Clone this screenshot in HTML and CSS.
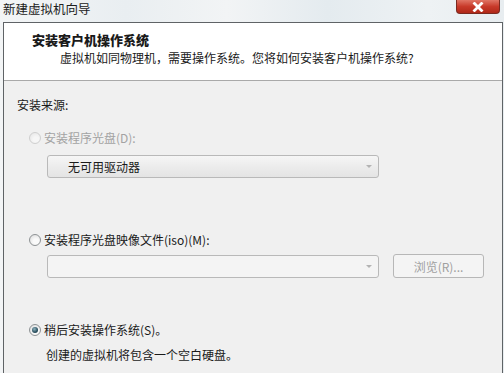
FILE: index.html
```html
<!DOCTYPE html>
<html lang="zh-CN">
<head>
    <meta charset="UTF-8">
    <title>新建虚拟机向导</title>
    <link rel="stylesheet" href="styles.css">
</head>
<body>
    <div class="titlebar">
        <span class="title">新建虚拟机向导</span>
        <span class="close-btn">
            <svg width="14" height="10" viewBox="0 0 14 10">
                <path d="M3.5 1.5 L10.5 8.5 M10.5 1.5 L3.5 8.5" stroke="#fff" stroke-width="2.8" stroke-linecap="square"/>
            </svg>
        </span>
    </div>

    <div class="dialog">
        <div class="header">
            <div class="header-title">安装客户机操作系统</div>
            <div class="header-sub">虚拟机如同物理机，需要操作系统。您将如何安装客户机操作系统?</div>
        </div>

        <div class="content">
            <div class="group-label">安装来源:</div>

            <div class="option option-first disabled">
                <span class="radio"></span>
                <span>安装程序光盘(D):</span>
            </div>
            <div class="combo combo-drive">
                <span class="combo-text">无可用驱动器</span>
                <span class="combo-arrow"></span>
            </div>

            <div class="option option-iso">
                <span class="radio"></span>
                <span>安装程序光盘映像文件(iso)(M):</span>
            </div>
            <div class="iso-row">
                <div class="combo combo-iso">
                    <span class="combo-text"></span>
                    <span class="combo-arrow"></span>
                </div>
                <button class="browse-btn" disabled>浏览(R)...</button>
            </div>

            <div class="option option-later">
                <span class="radio checked"></span>
                <span>稍后安装操作系统(S)。</span>
            </div>
            <div class="option-note">创建的虚拟机将包含一个空白硬盘。</div>
        </div>
    </div>
</body>
</html>
```

FILE: styles.css
```css
body {
    margin: 0;
    font-family: "Noto Sans CJK SC", "Liberation Sans", sans-serif;
    font-size: 12px;
    color: #1a1a1a;
    background: linear-gradient(to right, #f3f5f6, #e9eef1 25%, #f2f4f5 45%, #e4ebef 65%, #eef2f4 85%, #e8edf0);
    height: 373px;
    overflow: hidden;
}
.titlebar {
    height: 22px;
    display: flex;
    justify-content: space-between;
    align-items: flex-start;
    padding: 0 4px 0 3px;
}
.title {
    line-height: 18px;
    color: #202020;
    font-size: 12.5px;
}
.close-btn {
    width: 44px;
    height: 14px;
    box-sizing: border-box;
    border: 1px solid #7a2a20;
    border-top: none;
    border-radius: 0 0 4px 4px;
    background: linear-gradient(#e07565, #c83a2a 50%, #b02818);
    display: flex;
    align-items: center;
    justify-content: center;
}
.dialog {
    margin: 0 1px 0 3px;
    border: 1px solid #5f6366;
    border-bottom: none;
    background: #f0f0f0;
    height: 351px;
}
.header {
    background: #fff;
    height: 57px;
    border-bottom: 1px solid #a9a9a9;
}
.header-title {
    font-weight: 900;
    font-size: 13px;
    line-height: 16px;
    padding: 9px 0 0 28px;
}
.header-sub {
    line-height: 18px;
    padding-left: 56px;
    margin-top: 1px;
}
.content {
    padding-left: 13px;
}
.group-label {
    line-height: 18px;
    margin-top: 15px;
}
.option {
    display: flex;
    align-items: center;
    gap: 3px;
    line-height: 18px;
    padding-left: 12px;
}
.option-first {
    margin-top: 15px;
}
.option-iso {
    margin-top: 53px;
}
.option-later {
    margin-top: 43px;
}
.option.disabled {
    color: #a3a3a3;
}
.radio {
    width: 12px;
    height: 12px;
    box-sizing: border-box;
    border-radius: 50%;
    border: 1px solid #8e9294;
    background: radial-gradient(circle at 60% 65%, #fafafa 30%, #dcdcdc 90%);
    position: relative;
}
.disabled .radio {
    border-color: #cfcfcf;
    background: radial-gradient(circle at 60% 65%, #f6f6f6 30%, #e6e6e6 90%);
}
.radio.checked::after {
    content: "";
    position: absolute;
    left: 2px;
    top: 2px;
    width: 6px;
    height: 6px;
    border-radius: 50%;
    background: radial-gradient(circle at 40% 35%, #8fb4c0, #2a4f5e 60%, #1b3744);
}
.option-note {
    line-height: 18px;
    margin-top: 7px;
    padding-left: 29px;
}
.combo {
    margin-left: 30px;
    width: 332px;
    height: 23px;
    box-sizing: border-box;
    border: 1px solid #b9b9b9;
    border-radius: 3px;
    display: flex;
    align-items: center;
    justify-content: space-between;
    padding: 0 6px 0 20px;
}
.combo-drive {
    margin-top: 8px;
    background: linear-gradient(#f6f6f6, #ececec 50%, #e4e4e4);
}
.combo-iso {
    background: #f4f4f4;
}
.combo-text {
    line-height: 18px;
}
.combo-arrow {
    width: 0;
    height: 0;
    border-left: 3px solid transparent;
    border-right: 3px solid transparent;
    border-top: 3px solid #b3b3b3;
}
.iso-row {
    display: flex;
    align-items: center;
    gap: 14px;
    margin-top: 5px;
}
.browse-btn {
    width: 91px;
    height: 24px;
    border: 1px solid #b7b7b7;
    border-radius: 3px;
    background: #f4f4f4;
    color: #a0a0a0;
    font-family: inherit;
    font-size: 12px;
    padding: 0;
}
```
